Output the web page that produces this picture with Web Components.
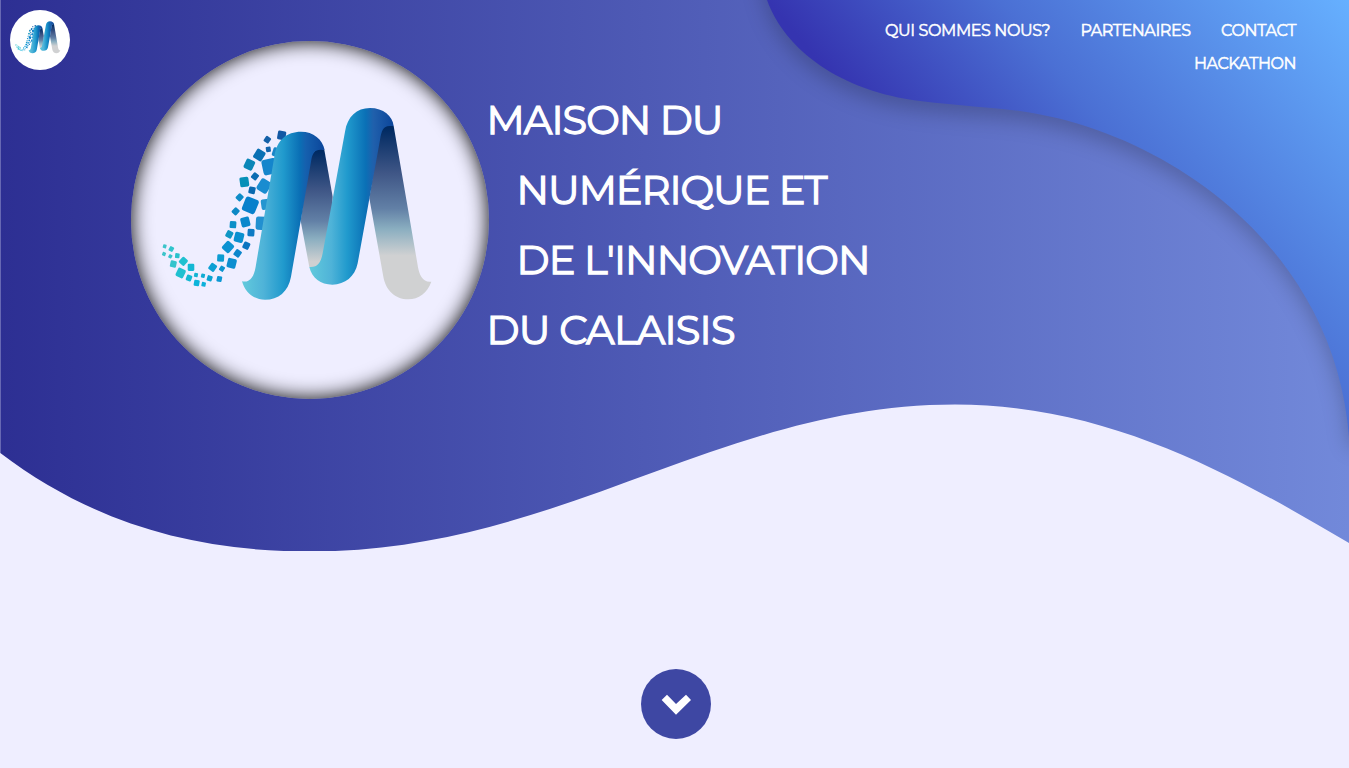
<!DOCTYPE html>
<html lang="fr">
<head>
<meta charset="utf-8">
<title>Maison du Numérique et de l'Innovation du Calaisis</title>
<style>
html, body { margin: 0; height: 100%; overflow: hidden; background: #efeeff; }
body { font-family: Montserrat, Lato, sans-serif; color: #fff; }
</style>
</head>
<body>
<home-page></home-page>
<script>
const define = (name, html, setup) => customElements.define(name, class extends HTMLElement {
  connectedCallback() {
    if (this.shadowRoot) return;
    const t = document.createElement('template');
    t.innerHTML = html;
    this.attachShadow({ mode: 'open' }).appendChild(t.content.cloneNode(true));
    if (setup) setup.call(this, this.shadowRoot);
  }
});

/* One line of text tracked out or in to a given width in pixels. */
define('fit-text', `<style>
  :host { display: block; white-space: nowrap; }
  span { display: inline-block; font-kerning: normal; }
</style><span><slot></slot></span>`, function (root) {
  const w = parseFloat(this.getAttribute('width'));
  const span = root.querySelector('span');
  this.style.width = w + 'px';
  const gap = w - span.getBoundingClientRect().width;
  span.style.letterSpacing = gap / (this.textContent.length - 1) + 'px';
});

/* Loose tiles of the logo: x, y, side, angle, colour */
const tiles = [
  [352,149,17,35,'#1360a8'],[395,136,24,10,'#1258a4'],[355,178,14,-8,'#1064ac'],[380,187,24,18,'#1a86c8'],
  [328,195,28,32,'#0a70b4'],[298,224,27,25,'#0a86b8'],[359,230,42,-12,'#1485cc'],[315,259,18,38,'#0a6cb2'],
  [283,276,26,-8,'#0690b8'],[342,288,34,32,'#1a8cd0'],[306,301,19,12,'#0a68b0'],[269,322,18,42,'#0e8cc8'],
  [301,346,40,22,'#0880cc'],[348,343,28,-8,'#2496d0'],[257,364,18,42,'#0c88c4'],[286,396,26,-14,'#0a88cc'],
  [336,400,36,3,'#2290d0'],[249,404,19,4,'#0c90c8'],[303,428,20,4,'#0e7ac4'],[238,433,19,28,'#0e96c4'],
  [267,442,27,14,'#0a90d0'],[289,467,19,25,'#0a74c0'],[234,471,27,42,'#0c92d2'],[263,490,19,35,'#0c86cc'],
  [212,504,20,3,'#0c9cd2'],[245,520,26,14,'#0c8ed0'],[188,532,20,35,'#0ca0d4'],[216,536,14,32,'#0c94d0'],
  [208,567,15,12,'#0c98d4'],[179,565,15,18,'#08a4d2'],[44,469,10,15,'#3cc4ca'],[64,477,13,30,'#30c4cc'],
  [42,492,10,20,'#3cc4ca'],[61,499,10,30,'#34c2cc'],[82,497,13,6,'#28c2cc'],[70,522,18,12,'#34c4cc'],
  [100,514,20,42,'#20c0d0'],[123,532,19,0,'#14b8d4'],[92,549,24,25,'#20c0d0'],[117,564,16,20,'#14b8d2'],
  [138,555,11,12,'#14b4d2'],[159,557,11,12,'#10acd2'],[140,579,16,10,'#0cb4da'],[161,583,12,12,'#0cb0da']
].map(([x, y, s, r, c]) =>
  `<rect x="${-s / 2}" y="${-s / 2}" width="${s}" height="${s}" rx="${s * .18}" fill="${c}" transform="translate(${x} ${y}) rotate(${r}) scale(1.04 1.12)"/>`).join('');

define('mnic-logo', `<style>
  :host { display: block; border-radius: 50%; flex: none; }
  svg { display: block; width: 100%; height: 100%; }
</style>
<svg viewBox="33 33 1074 1074">
  <defs>
    <linearGradient id="a" gradientUnits="userSpaceOnUse" x1="36" x2="284" y1="0" y2="0">
      <stop offset="0" stop-color="#62cadc"/><stop offset=".26" stop-color="#4fb3d8"/><stop offset=".5" stop-color="#209acd"/><stop offset=".7" stop-color="#0a6fb5"/><stop offset=".77" stop-color="#1560ae"/><stop offset="1" stop-color="#0b459a"/>
    </linearGradient>
    <linearGradient id="b" gradientUnits="userSpaceOnUse" x1="238" x2="491" y1="0" y2="0">
      <stop offset="0" stop-color="#62cadc"/><stop offset=".26" stop-color="#4fb3d8"/><stop offset=".45" stop-color="#209acd"/><stop offset=".67" stop-color="#0a70b6"/><stop offset=".76" stop-color="#2060ac"/><stop offset="1" stop-color="#0b459a"/>
    </linearGradient>
    <linearGradient id="c" gradientUnits="userSpaceOnUse" x1="0" x2="0" y1="185" y2="515">
      <stop offset="0" stop-color="#002a62"/><stop offset=".35" stop-color="#3f5686"/><stop offset=".63" stop-color="#6280a6"/><stop offset=".79" stop-color="#8aaec0"/><stop offset="1" stop-color="#cfd0d1"/>
    </linearGradient>
    <linearGradient id="d" gradientUnits="userSpaceOnUse" x1="0" x2="0" y1="115" y2="497">
      <stop offset="0" stop-color="#002a62"/><stop offset=".35" stop-color="#3f5686"/><stop offset=".63" stop-color="#6280a6"/><stop offset=".79" stop-color="#8aaec0"/><stop offset="1" stop-color="#d0d1d2"/>
    </linearGradient>
  </defs>
  <g transform="translate(90 180)">${tiles}</g>
  <g transform="translate(330 180)">
    <path fill="url(#c)" d="M235 225C244 190 252 176 275 176L283 180L308 320L300 500L270 540L238 531L212 392Z"/>
    <path fill="url(#d)" d="M445 150C450 118 460 104 480 104L491 108L562 520C567 560 580 578 604 575C592 609 566 628 535 628C495 628 467 600 460 560L418 325Z"/>
    <path fill="url(#a)" d="M36 574C60 579 72 560 77 530L133 200C140 150 170 125 213 125C250 125 278 148 284 180L272 179C253 179 247 190 243 215L183 560C175 605 145 629 105 629C70 629 45 607 36 574Z"/>
    <path fill="url(#b)" d="M238 531C262 533 272 520 278 490L345 125C352 80 380 54 420 54C460 54 488 78 491 108L478 108C460 109 454 122 450 150L383 520C375 560 345 584 307 584C272 584 246 565 238 531Z"/>
  </g>
</svg>`);

define('wave-backdrop', `<style>
  :host { display: block; width: 1349px; height: 551px; overflow: hidden; }
  svg { display: block; }
</style>
<svg width="1349" height="551" viewBox="0 0 1349 551">
  <defs>
    <linearGradient id="w" gradientUnits="userSpaceOnUse" x1="0" x2="1349" y1="0" y2="0"><stop stop-color="#2d2f93"/><stop offset="1" stop-color="#7289da"/></linearGradient>
    <linearGradient id="n" gradientUnits="userSpaceOnUse" x1="830" y1="75" x2="1173" y2="-210"><stop stop-color="#3534b0"/><stop offset=".4" stop-color="#4b70d4"/><stop offset="1" stop-color="#66b0ff"/></linearGradient>
    <filter id="s" filterUnits="userSpaceOnUse" x="700" y="-60" width="720" height="600" color-interpolation-filters="sRGB"><feDropShadow dx="0" dy="10" stdDeviation="10" flood-color="#000" flood-opacity=".2"/></filter>
  </defs>
  <path fill="url(#w)" d="M.3 0V453C90 521 190 551.5 310 551.5C560 551.5 720 404.500 955 404.500C1110 404.500 1235 476 1349 543V0Z"/>
  <path fill="url(#n)" filter="url(#s)" d="M767 0C785 50 840 91 920 101C960 106 990 107 1020 111C1170 132 1335 250 1349 437H1400V-40H757Z"/>
</svg>`);

define('nav-link', `<style>
  :host { display: block; }
  a { color: inherit; text-decoration: none; display: block; font-size: 16px; line-height: 33px; font-weight: 400; -webkit-text-stroke: .5px #fff; }
</style><a href="#"><slot></slot></a>`);

define('site-nav', `<style>
  :host { display: flex; justify-content: space-between; padding: 10px 52.500px 0 10px; }
  mnic-logo { width: 60px; height: 60px; background: #fff; }
  nav { display: flex; flex-wrap: wrap; justify-content: flex-end; column-gap: 30px; width: 500px; padding-top: 4px; }
</style>
<mnic-logo></mnic-logo>
<nav>
  <nav-link><fit-text width="165.500">QUI SOMMES NOUS?</fit-text></nav-link>
  <nav-link><fit-text width="110.500">PARTENAIRES</fit-text></nav-link>
  <nav-link><fit-text width="75.500">CONTACT</fit-text></nav-link>
  <nav-link><fit-text width="102.500">HACKATHON</fit-text></nav-link>
</nav>`);

define('hero-title', `<style>
  :host { display: flex; align-items: flex-start; padding: 41px 0 0 131px; }
  mnic-logo { width: 358px; height: 358px; background: #efeeff; box-shadow: inset 0 0 20px #000; }
  h1 { margin: 44px 0 0 -2.500px; font-size: 40px; line-height: 70px; font-weight: 400; -webkit-text-stroke: 1.250px #fff; }
  .in { margin-left: 30px; }
</style>
<mnic-logo></mnic-logo>
<h1>
  <fit-text width="237">MAISON DU</fit-text>
  <fit-text class="in" width="311">NUMÉRIQUE ET</fit-text>
  <fit-text class="in" width="354">DE L'INNOVATION</fit-text>
  <fit-text width="249">DU CALAISIS</fit-text>
</h1>`);

define('scroll-button', `<style>
  :host { display: block; width: 70px; height: 70px; }
  button { all: unset; display: block; cursor: pointer; }
  svg { display: block; }
</style>
<button aria-label="Descendre"><svg width="70" height="70" viewBox="0 0 210 210"><circle cx="105" cy="105" r="105" fill="#3e47a3"/><path fill="#fff" d="M62 93L78 77L105 105L135 77L150 93L105 137Z"/></svg></button>`);

define('home-page', `<style>
  :host { display: grid; grid-template: 669px 1fr / 1fr; height: 768px; }
  wave-backdrop, hero-title, site-nav { grid-area: 1 / 1; align-self: start; }
  scroll-button { grid-area: 2 / 1; justify-self: center; margin: 0 0 0 3px; }
</style>
<wave-backdrop></wave-backdrop>
<hero-title></hero-title>
<site-nav></site-nav>
<scroll-button></scroll-button>`);
</script>
</body>
</html>
